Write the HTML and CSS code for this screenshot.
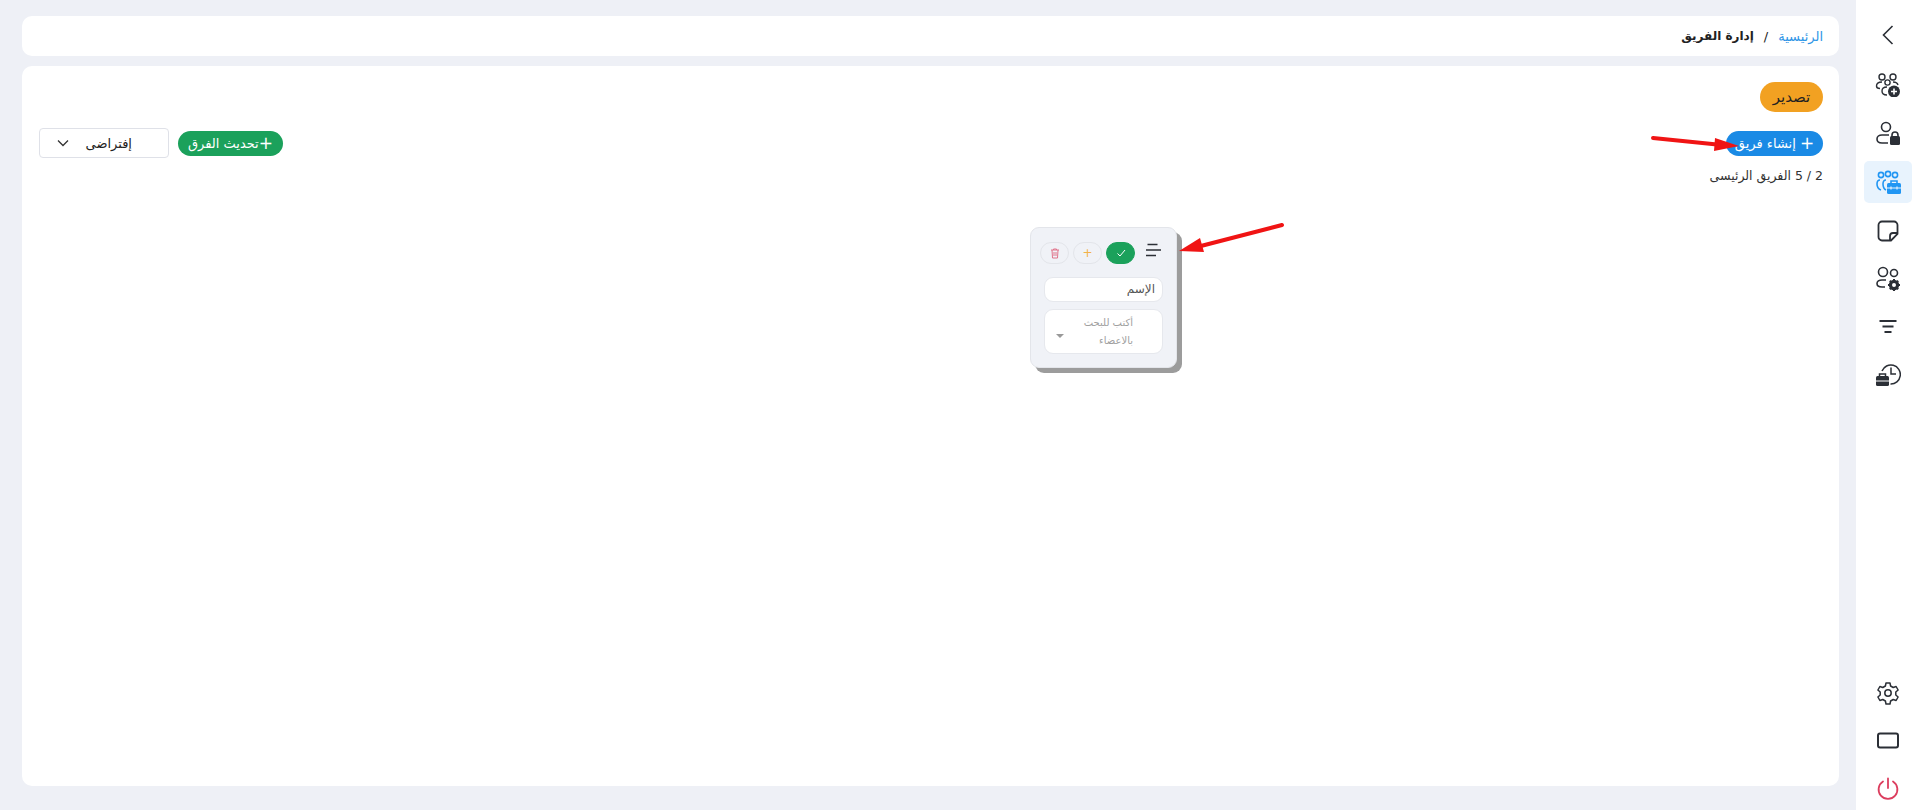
FILE: index.html
```html
<!DOCTYPE html>
<html lang="ar" dir="rtl">
<head>
  <meta charset="UTF-8">
  <meta name="viewport" content="width=device-width, initial-scale=1.0">
  <title>إدارة الفريق</title>
  <link rel="stylesheet" href="styles.css">
</head>
<body>
  <!-- Sidebar -->
  <aside class="sidebar">
    <div class="side-group">
      <a class="side-item">
        <svg width="24" height="24" viewBox="0 0 24 24" fill="none" stroke="#2b2f36" stroke-width="1.6"><path d="M16.500 3 7.500 12l9 9"/></svg>
      </a>
      <a class="side-item">
        <svg width="26" height="26" viewBox="0 -1.500 26 26" fill="none" stroke="#2b2f36" stroke-width="1.4"><circle cx="7" cy="4.500" r="3"/><circle cx="18" cy="4.500" r="3"/><circle cx="12.500" cy="10" r="2.600"/><path d="M7 9.500C3 9.500 1.500 11.500 1.500 13.500c0 1.500 1.500 2.500 3.500 2.500M18 9.500c2.500 0 4.500 1 5 3M12 14.500c-3 0-5 1.500-5 4 0 2.500 2 4 5 4"/><circle cx="19" cy="19" r="6" fill="#2b2f36" stroke="none"/><path d="M19 16v6M16 19h6" stroke="#fff" stroke-width="1.600"/></svg>
      </a>
      <a class="side-item">
        <svg width="26" height="26" viewBox="0 -1 26 26" fill="none" stroke="#2b2f36" stroke-width="1.6"><circle cx="11" cy="6" r="4.500"/><path d="M14 14H7c-3 0-5 1.500-5 4s2 4 5 4h6"/><path d="M17 16v-2a3 3 0 0 1 6 0v2"/><rect x="15" y="15" width="10" height="9" rx="1.500" fill="#2b2f36" stroke="none"/></svg>
      </a>
      <a class="side-item active">
        <svg width="26" height="26" viewBox="0 -1 26 26" fill="none" stroke="#2196f3" stroke-width="1.6"><circle cx="6" cy="5" r="2.600"/><circle cx="13" cy="4" r="2.600"/><circle cx="20" cy="5" r="2.600"/><path d="M5 10c-2 0-3 1.500-3 4s1 5 4 6M11 10c-2 0-3 1.500-3 4 0 3 1 5 3 6"/><path d="M16 13v-2h6v2"/><rect x="12" y="13" width="14" height="11" rx="1.500" fill="#2196f3" stroke="none"/><path d="M12 18h14M16 16.500v3M22 16.500v3" stroke="#e8f3fd" stroke-width="1.200"/></svg>
      </a>
      <a class="side-item short">
        <svg width="24" height="24" viewBox="0 0 24 24" fill="none" stroke="#2b2f36" stroke-width="1.800"><path d="M15 21.500H6A3.500 3.500 0 0 1 2.500 18V6A3.500 3.500 0 0 1 6 2.500h12A3.500 3.500 0 0 1 21.500 6v9L15 21.500Z"/><path d="M21.500 14H17a3 3 0 0 0-3 3v4.500"/></svg>
      </a>
      <a class="side-item short">
        <svg width="26" height="26" viewBox="0 0 26 26" fill="none" stroke="#2b2f36" stroke-width="1.600"><circle cx="8" cy="6" r="4.500"/><circle cx="19" cy="7" r="3.500"/><path d="M11 14H7c-3 0-5 1.500-5 3.500S4 21 7 21h3"/><circle cx="19" cy="19" r="3.600" stroke-width="3.200"/><path d="M19 13v2.500M19 22.500V25M13 19h2.500M22.500 19H25M14.800 14.800l1.800 1.800M21.400 21.400l1.800 1.800M14.800 23.200l1.800-1.800M21.400 16.600l1.800-1.800" stroke-width="2"/></svg>
      </a>
      <a class="side-item short">
        <svg width="24" height="24" viewBox="0 1 24 24" fill="none" stroke="#2b2f36" stroke-width="2"><path d="M3.500 7h17M6.500 12.500h11M8.500 18h7"/></svg>
      </a>
      <a class="side-item short">
        <svg width="26" height="26" viewBox="0 1 26 26" fill="none" stroke="#2b2f36" stroke-width="1.500"><path d="M7 10a9.500 9.500 0 1 1 8.500 13"/><path d="M16 6.500V13h5"/><path d="M4.500 15v-2h6v2"/><rect x="1" y="15" width="13" height="10" rx="1.500" fill="#2b2f36" stroke="none"/><path d="M1 20h13" stroke="#fff" stroke-width="1"/></svg>
      </a>
    </div>
    <div class="side-group">
      <a class="side-item">
        <svg width="24" height="24" viewBox="0 0 24 24" fill="none" stroke="#2b2f36" stroke-width="1.500"><circle cx="12" cy="12" r="3.200"/><path d="M10 2h4l.6 3 2.600 1.500 2.900-1 2 3.500-2.300 2v3l2.300 2-2 3.500-2.900-1-2.600 1.500-.6 3h-4l-.6-3-2.600-1.500-2.900 1-2-3.500 2.300-2v-3l-2.300-2 2-3.500 2.900 1L9.400 5Z" stroke-linejoin="round"/></svg>
      </a>
      <a class="side-item">
        <svg width="24" height="24" viewBox="0 0 24 24" fill="none" stroke="#2b2f36" stroke-width="2"><rect x="2" y="4.500" width="20" height="14" rx="2"/></svg>
      </a>
      <a class="side-item">
        <svg width="24" height="24" viewBox="0 0 24 24" fill="none" stroke="#dc3d5e" stroke-width="1.800" stroke-linecap="round"><path d="M7 4.500a9.400 9.400 0 1 0 10 0M12 1.500V11"/></svg>
      </a>
    </div>
  </aside>

  <div class="content">
    <!-- Breadcrumb -->
    <nav class="breadcrumb">
      <a class="crumb-link">الرئيسية</a>
      <span class="crumb-sep">/</span>
      <span class="crumb-current">إدارة الفريق</span>
    </nav>

    <main class="panel">
      <div class="export-row">
        <button class="btn btn-export">تصدير</button>
      </div>

      <div class="toolbar">
        <button class="btn btn-create"><span class="plus">+</span> إنشاء فريق</button>
        <div class="toolbar-left">
          <button class="btn btn-update"><span class="plus">+</span>تحديث الفرق</button>
          <div class="select-box">
            <span>إفتراضى</span>
            <svg width="14" height="14" viewBox="0 0 14 14" fill="none" stroke="#333" stroke-width="1.300"><path d="M2 4.500 7 9.500l5-5"/></svg>
          </div>
        </div>
      </div>

      <p class="team-count">2 / 5 الفريق الرئيسى</p>

      <!-- Team node on the canvas -->
      <div class="team-node">
        <div class="node-actions">
          <svg class="node-menu" width="16" height="14" viewBox="0 0 16 14" fill="none" stroke="#2b2f36" stroke-width="1.400"><path d="M1.500 1.500h10M0 7h15M0 12.500h10"/></svg>
          <span class="node-btn node-btn-ok">
            <svg width="10" height="10" viewBox="0 0 10 10" fill="none" stroke="#fff" stroke-width="1"><path d="M1.500 5.500 4 8l5-6"/></svg>
          </span>
          <span class="node-btn node-btn-add">+</span>
          <span class="node-btn">
            <svg width="10" height="11" viewBox="0 0 10 11" fill="none" stroke="#e0738a" stroke-width="1"><path d="M1 2h8M3.500 2V1h3v1M2 2l.5 8h5L8 2M4 4v4M6 4v4"/></svg>
          </span>
        </div>
        <div class="node-input">الإسم</div>
        <div class="node-select">
          <span class="node-select-text">أكتب للبحث بالاعضاء</span>
          <span class="node-caret"></span>
        </div>
      </div>

      <!-- Red annotation arrows -->
      <svg class="arrow-layer" width="1817" height="300" viewBox="0 0 1817 300" fill="none">
        <path d="M1631 72 1700 79" stroke="#f01414" stroke-width="4" stroke-linecap="round"/>
        <path d="M1693 72 1717 80 1692 85Z" fill="#f01414"/>
        <path d="M1260 159 1175 181" stroke="#f01414" stroke-width="4" stroke-linecap="round"/>
        <path d="M1178 172 1157 185 1182 186Z" fill="#f01414"/>
      </svg>
    </main>
  </div>
</body>
</html>
```

FILE: styles.css
```css
* {
  box-sizing: border-box;
}

html, body {
  height: 100%;
}

body {
  margin: 0;
  display: flex;
  height: 810px;
  overflow: hidden;
  background: #eef0f6;
  color: #222;
  font-family: "DejaVu Sans", "Noto Sans", sans-serif;
}

/* Sidebar */
.sidebar {
  width: 63px;
  flex-shrink: 0;
  background: #fff;
  display: flex;
  flex-direction: column;
  justify-content: space-between;
  align-items: center;
  padding: 14px 0 0;
}

.side-group {
  display: flex;
  flex-direction: column;
  align-items: center;
  gap: 7px;
}

.side-item {
  width: 48px;
  height: 42px;
  display: flex;
  justify-content: center;
  align-items: center;
  border-radius: 5px;
}

.side-item.short {
  height: 41px;
}

.side-item.active {
  background: #e8f3fd;
}

.side-group:last-child {
  gap: 6px;
}

/* Content */
.content {
  flex: 1;
  min-width: 0;
  padding: 16px 17px 24px 22px;
  display: flex;
  flex-direction: column;
  gap: 10px;
}

.breadcrumb {
  height: 40px;
  flex-shrink: 0;
  background: #fff;
  border-radius: 10px;
  padding: 0 16px;
  display: flex;
  align-items: center;
  gap: 10px;
  font-size: 13px;
}

.crumb-link {
  color: #2f95e6;
}

.crumb-current {
  font-weight: bold;
  font-size: 12px;
}

.panel {
  flex: 1;
  position: relative;
  background: #fff;
  border-radius: 10px;
  padding: 16px 16px 0 17px;
}

.export-row {
  display: flex;
}

.btn {
  border: none;
  font-family: inherit;
  cursor: pointer;
  border-radius: 15px;
  color: #fff;
  font-size: 13px;
  padding: 0 10px;
  white-space: nowrap;
}

.plus {
  font-size: 17px;
  line-height: 1;
  vertical-align: -1px;
}

.btn-export {
  width: 63px;
  height: 30px;
  background: #f2a122;
  color: #222;
  font-size: 15px;
}

.toolbar {
  display: flex;
  justify-content: space-between;
  align-items: center;
  margin-top: 16px;
  height: 30px;
}

.toolbar-left {
  display: flex;
  align-items: center;
  gap: 9px;
}

.btn-create {
  width: 97px;
  height: 25px;
  background: #1a8ae5;
  padding: 0 6px;
}

.btn-update {
  width: 105px;
  height: 25px;
  background: #1ba15b;
  padding: 0 6px;
}

.select-box {
  width: 130px;
  height: 30px;
  border: 1px solid #dfe1e8;
  border-radius: 4px;
  padding: 0 36px 0 16px;
  display: flex;
  justify-content: space-between;
  align-items: center;
  font-size: 13px;
  gap: 10px;
}

.team-count {
  margin: 8px 0 0;
  font-size: 12.500px;
  line-height: 20px;
  color: #333;
}

/* Team node */
.team-node {
  position: absolute;
  left: 1008px;
  top: 161px;
  width: 147px;
  height: 141px;
  background: #f0f2f7;
  border: 1px solid #e3e5ea;
  border-radius: 9px;
  box-shadow: 5px 5px 0 #9c9c9c;
  padding: 14px 13px 0;
}

.node-actions {
  display: flex;
  align-items: center;
  gap: 4px;
  margin-right: 1px;
}

.node-menu {
  flex-shrink: 0;
  margin: -6px 0 0 7px;
}

.node-btn {
  flex-shrink: 0;
  width: 29px;
  height: 22px;
  border-radius: 11px;
  border: 1px solid #e3e5ea;
  display: flex;
  align-items: center;
  justify-content: center;
  font-size: 12px;
}

.node-btn-ok {
  background: #1ba15b;
  border-color: #1ba15b;
}

.node-btn-add {
  color: #f2b24a;
}

.node-input {
  height: 25px;
  margin-top: 13px;
  background: #fff;
  border: 1px solid #e6e8ed;
  border-radius: 9px;
  padding: 0 7px;
  font-size: 12px;
  line-height: 23px;
  color: #555;
}

.node-select {
  height: 45px;
  margin-top: 7px;
  background: #fff;
  border: 1px solid #e6e8ed;
  border-radius: 9px;
  display: flex;
  justify-content: space-between;
  align-items: center;
  padding: 0 29px 0 11px;
}

.node-select-text {
  width: 66px;
  font-size: 10px;
  line-height: 18px;
  color: #a0a0a0;
}

.node-caret {
  margin-top: 8px;
  border-top: 4px solid #999;
  border-left: 4px solid transparent;
  border-right: 4px solid transparent;
}

.arrow-layer {
  position: absolute;
  left: 0;
  top: 0;
  pointer-events: none;
}
```
